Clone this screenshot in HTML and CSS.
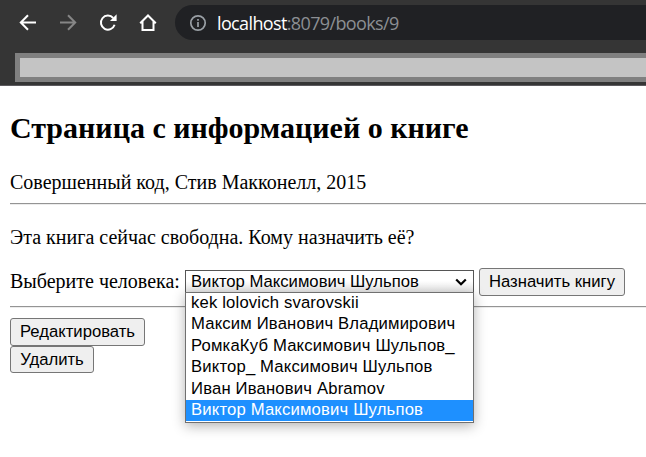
FILE: index.html
```html
<!DOCTYPE html>
<html lang="ru">
<head>
<meta charset="utf-8">
<title>Книга</title>
<link rel="stylesheet" href="styles.css">
</head>
<body>
<header class="browser">
  <nav class="toolbar">
    <svg class="icon" viewBox="0 0 18 18"><path d="M17 8.5H2M9 1.3 1.8 8.5 9 15.7"/></svg>
    <svg class="icon disabled" viewBox="0 0 18 18"><path d="M1 8.5h15M9 1.3l7.2 7.2L9 15.7"/></svg>
    <svg class="icon" viewBox="0 0 18 18"><path d="M15.6 10.7A7 7 0 1 1 14.2 4"/><path class="solid" d="M17.6.3v6.6H11z"/></svg>
    <svg class="icon" viewBox="0 0 18 18"><path d="M1.2 9.2 9 1.5l7.8 7.7M3.5 7.5v8.4h11V7.5"/></svg>
    <div class="address">
      <svg class="info" viewBox="0 0 18 18"><circle cx="9" cy="9" r="7.2"/><path d="M9 8v5M9 5v1.8"/></svg>
      <span class="url"><span class="host">localhost</span>:8079/books/9</span>
    </div>
  </nav>
  <div class="bookmarks"></div>
</header>
<main class="page">
  <h2>Страница с информацией о книге</h2>
  <div class="book">Совершенный код, Стив Макконелл, 2015</div>
  <hr>
  <p>Эта книга сейчас свободна. Кому назначить её?</p>
  <form class="assign">
    <label>Выберите человека:</label>
    <div class="select">
      <span>Виктор Максимович Шульпов</span>
      <svg class="chevron" viewBox="0 0 12 8"><path d="m1.2 1.5 4.8 4.7 4.8-4.7"/></svg>
      <ul class="options">
        <li>kek lolovich svarovskii</li>
        <li>Максим Иванович Владимирович</li>
        <li>РомкаКуб Максимович Шульпов_</li>
        <li>Виктор_ Максимович Шульпов</li>
        <li>Иван Иванович Abramov</li>
        <li class="selected">Виктор Максимович Шульпов</li>
      </ul>
    </div>
    <button type="button" class="assign-button">Назначить книгу</button>
  </form>
  <hr>
  <div class="actions">
    <button type="button" class="edit">Редактировать</button>
    <button type="button" class="delete">Удалить</button>
  </div>
</main>
</body>
</html>
```
FILE: styles.css
```css
* { box-sizing: border-box; }
body {
  min-height: 100vh;
  margin: 0;
  background: #fff;
  color: #000;
  font: 20px/23px "Liberation Serif", serif;
}
.browser {
  height: 86px;
  padding-top: 5px;
  background: #353535;
  border-bottom: 1px solid #5c5a5e;
}
.toolbar {
  display: flex;
  align-items: center;
  height: 35px;
  padding-left: 19px;
}
.icon {
  flex: none;
  width: 18px;
  height: 18px;
  margin-right: 22px;
  fill: none;
  stroke: #fff;
  stroke-width: 2;
}
.disabled { stroke: #868686; }
.icon .solid { fill: #fff; stroke: none; }
.address {
  display: flex;
  align-items: center;
  flex: 1;
  height: 35px;
  margin-left: -4px;
  padding-left: 14px;
  border-radius: 18px 0 0 18px;
  background: #202124;
}
.info {
  width: 18px;
  height: 18px;
  margin-right: 10px;
  fill: none;
  stroke: #9aa0a6;
  stroke-width: 1.7;
}
.url {
  color: #8c8f93;
  font: 18px/24px "Open Sans", sans-serif;
  letter-spacing: -0.63px;
  white-space: nowrap;
}
.host { color: #fff; }
.bookmarks {
  height: 29px;
  margin: 13px 0 0 15px;
  border: 5px solid #808080;
  border-right: 0;
  background: #c4c4c4;
}
.page {
  min-height: 371px;
  padding: 25px 0 0 10px;
}
h2 {
  margin: 0 0 25px;
  font-size: 30px;
  line-height: 34px;
}
.book {
  height: 23px;
  line-height: 25px;
}
hr {
  height: 2px;
  margin: 10px 0;
  border: 0;
  border-top: 1px solid #949494;
  border-bottom: 1px solid #ececec;
}
p {
  height: 23px;
  margin: 20px 0;
  line-height: 25px;
}
.assign {
  display: flex;
  align-items: flex-start;
  height: 28px;
}
label {
  width: 175px;
  padding-top: 2px;
  white-space: nowrap;
}
.select {
  position: relative;
  display: flex;
  align-items: center;
  justify-content: space-between;
  width: 289px;
  height: 24px;
  margin: 2px 5px 0 0;
  padding: 0 6px 1px 5px;
  border: 1px solid #555;
  background: linear-gradient(#fff 45%, #e5e5e5);
  font: 16.67px/21px "Liberation Sans", sans-serif;
}
.chevron {
  width: 12px;
  height: 8px;
  fill: none;
  stroke: #000;
  stroke-width: 2.2;
}
.options {
  position: absolute;
  z-index: 1;
  top: 21px;
  left: -1px;
  width: 289px;
  height: 131px;
  margin: 0;
  padding: 0;
  border: 1px solid #707070;
  background: #fff;
  box-shadow: 0 3px 12px rgba(0, 0, 0, .3);
  letter-spacing: 0.17px;
  list-style: none;
}
.options li {
  height: 21.4px;
  padding-left: 5px;
  line-height: 20px;
  white-space: nowrap;
}
.options .selected { background: #1e90ff; color: #fff; }
button {
  height: 28px;
  padding: 0;
  border: 1px solid #767676;
  border-radius: 3px;
  background: #efefef;
  color: #000;
  font: 16.67px/20px "Liberation Sans", sans-serif;
}
.assign-button { width: 146px; }
.actions {
  display: flex;
  flex-direction: column;
  align-items: flex-start;
}
.edit { width: 135px; }
.delete { width: 84px; height: 27px; }
```
